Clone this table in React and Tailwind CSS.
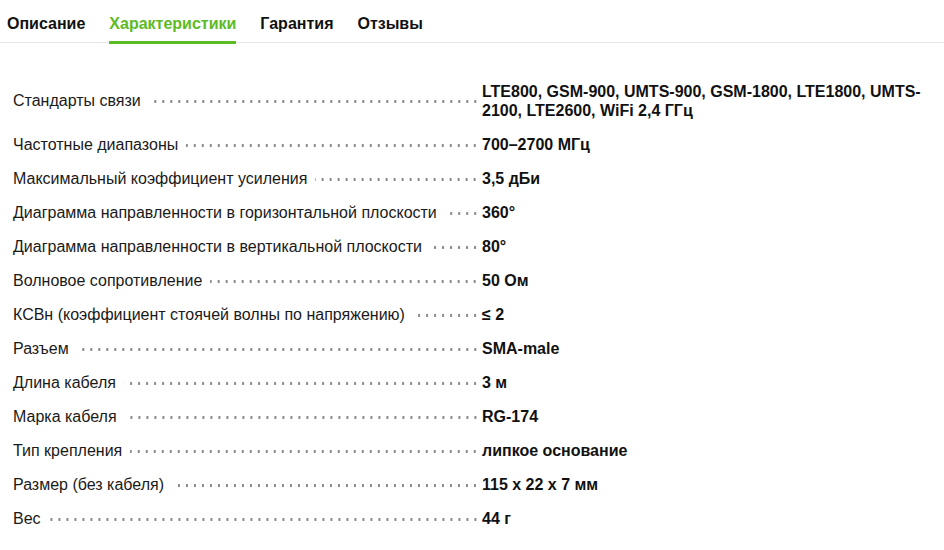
import React, { useState } from "react";

const tabs = ["Описание", "Характеристики", "Гарантия", "Отзывы"];

const specs = [
  ["Стандарты связи", "LTE800, GSM-900, UMTS-900, GSM-1800, LTE1800, UMTS-2100, LTE2600, WiFi 2,4 ГГц"],
  ["Частотные диапазоны", "700–2700 МГц"],
  ["Максимальный коэффициент усиления", "3,5 дБи"],
  ["Диаграмма направленности в горизонтальной плоскости", "360°"],
  ["Диаграмма направленности в вертикальной плоскости", "80°"],
  ["Волновое сопротивление", "50 Ом"],
  ["КСВн (коэффициент стоячей волны по напряжению)", "≤ 2"],
  ["Разъем", "SMA-male"],
  ["Длина кабеля", "3 м"],
  ["Марка кабеля", "RG-174"],
  ["Тип крепления", "липкое основание"],
  ["Размер (без кабеля)", "115 х 22 х 7 мм"],
  ["Вес", "44 г"],
];

const App = () => {
  const [active, setactive] = useState(1);

  return (
    <div className="min-h-[550px] bg-white font-['Liberation_Sans',Arial,sans-serif] text-[16px] leading-[19px]">
      <div className="flex h-[43px] items-start gap-6 border-b border-[#e6e6e6] pl-[7px]">
        {tabs.map((t, i) => (
          <button
            key={t}
            onClick={() => setactive(i)}
            className={`shrink-0 border-b-[3px] pt-[14px] pb-[7px] text-[16px] font-bold leading-[20px] ${
              active === i
                ? "border-[#5dbb24] text-[#5dbb24]"
                : "border-transparent text-[#111]"
            }`}
          >
            {t}
          </button>
        ))}
      </div>

      <div className="mt-[31px] pl-[13px]">
        {specs.map(([label, value]) => (
          <div key={label} className="flex items-center py-[7.5px]">
            <div className="flex w-[466px] shrink-0 items-center text-[#1a1a1a]">
              <span className="shrink-0">{label}</span>
              <span className="ml-2 h-[19px] flex-1 bg-[radial-gradient(circle_at_4px_10.5px,#888_1.1px,transparent_1.4px)] bg-[length:8px_19px] bg-right bg-repeat-x"></span>
            </div>
            <div className="ml-[3px] w-[445px] font-bold text-[#111]">{value}</div>
          </div>
        ))}
      </div>
    </div>
  );
};

export default App;
